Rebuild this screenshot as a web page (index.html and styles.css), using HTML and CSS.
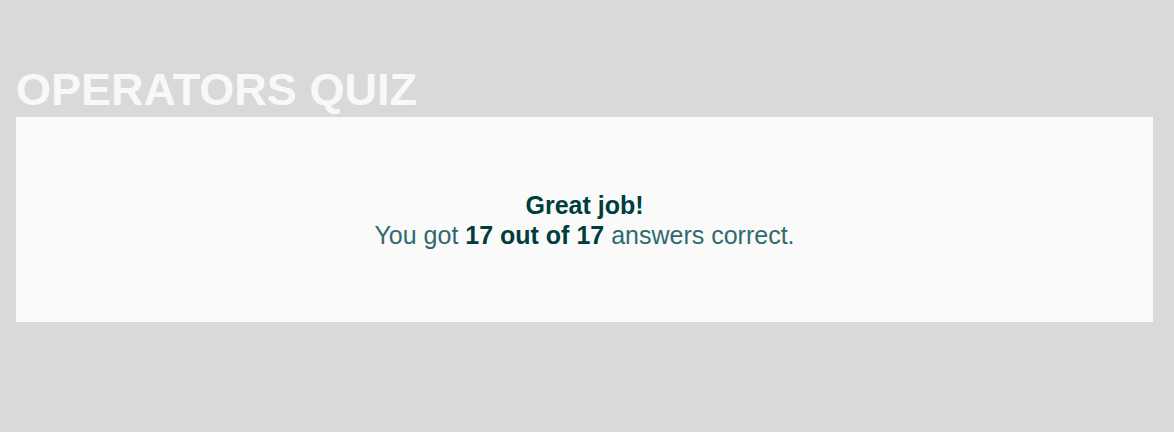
FILE: index.html
```html
<!DOCTYPE html>
<html>
<head>
<meta charset="utf-8">
<link rel="stylesheet" href="styles.css">
</head>
<body>
<div class="page">
  <h1 class="title">OPERATORS QUIZ</h1>
  <div class="card">
    <div class="result">
      <div class="headline">Great job!</div>
      <div class="score">You got <strong>17 out of 17</strong> answers correct.</div>
    </div>
  </div>
</div>
</body>
</html>
```
FILE: styles.css
```css
html, body {
  margin: 0;
  padding: 0;
  background: #d9d9d9;
  font-family: "Liberation Sans", Arial, sans-serif;
}
.page {
  width: 1137px;
  padding: 64px 0 0 16px;
}
.title {
  margin: 0 0 2px 0;
  font-size: 45px;
  font-weight: bold;
  color: #f8f8f8;
  line-height: 51px;
}
.card {
  background: #fafafa;
  height: 205px;
  display: flex;
  align-items: center;
  justify-content: center;
}
.result {
  text-align: center;
  font-size: 25px;
  line-height: 30px;
  color: #2f6b6e;
}
.headline {
  font-weight: bold;
  color: #003d3d;
}
.score strong {
  color: #003d3d;
}
```
